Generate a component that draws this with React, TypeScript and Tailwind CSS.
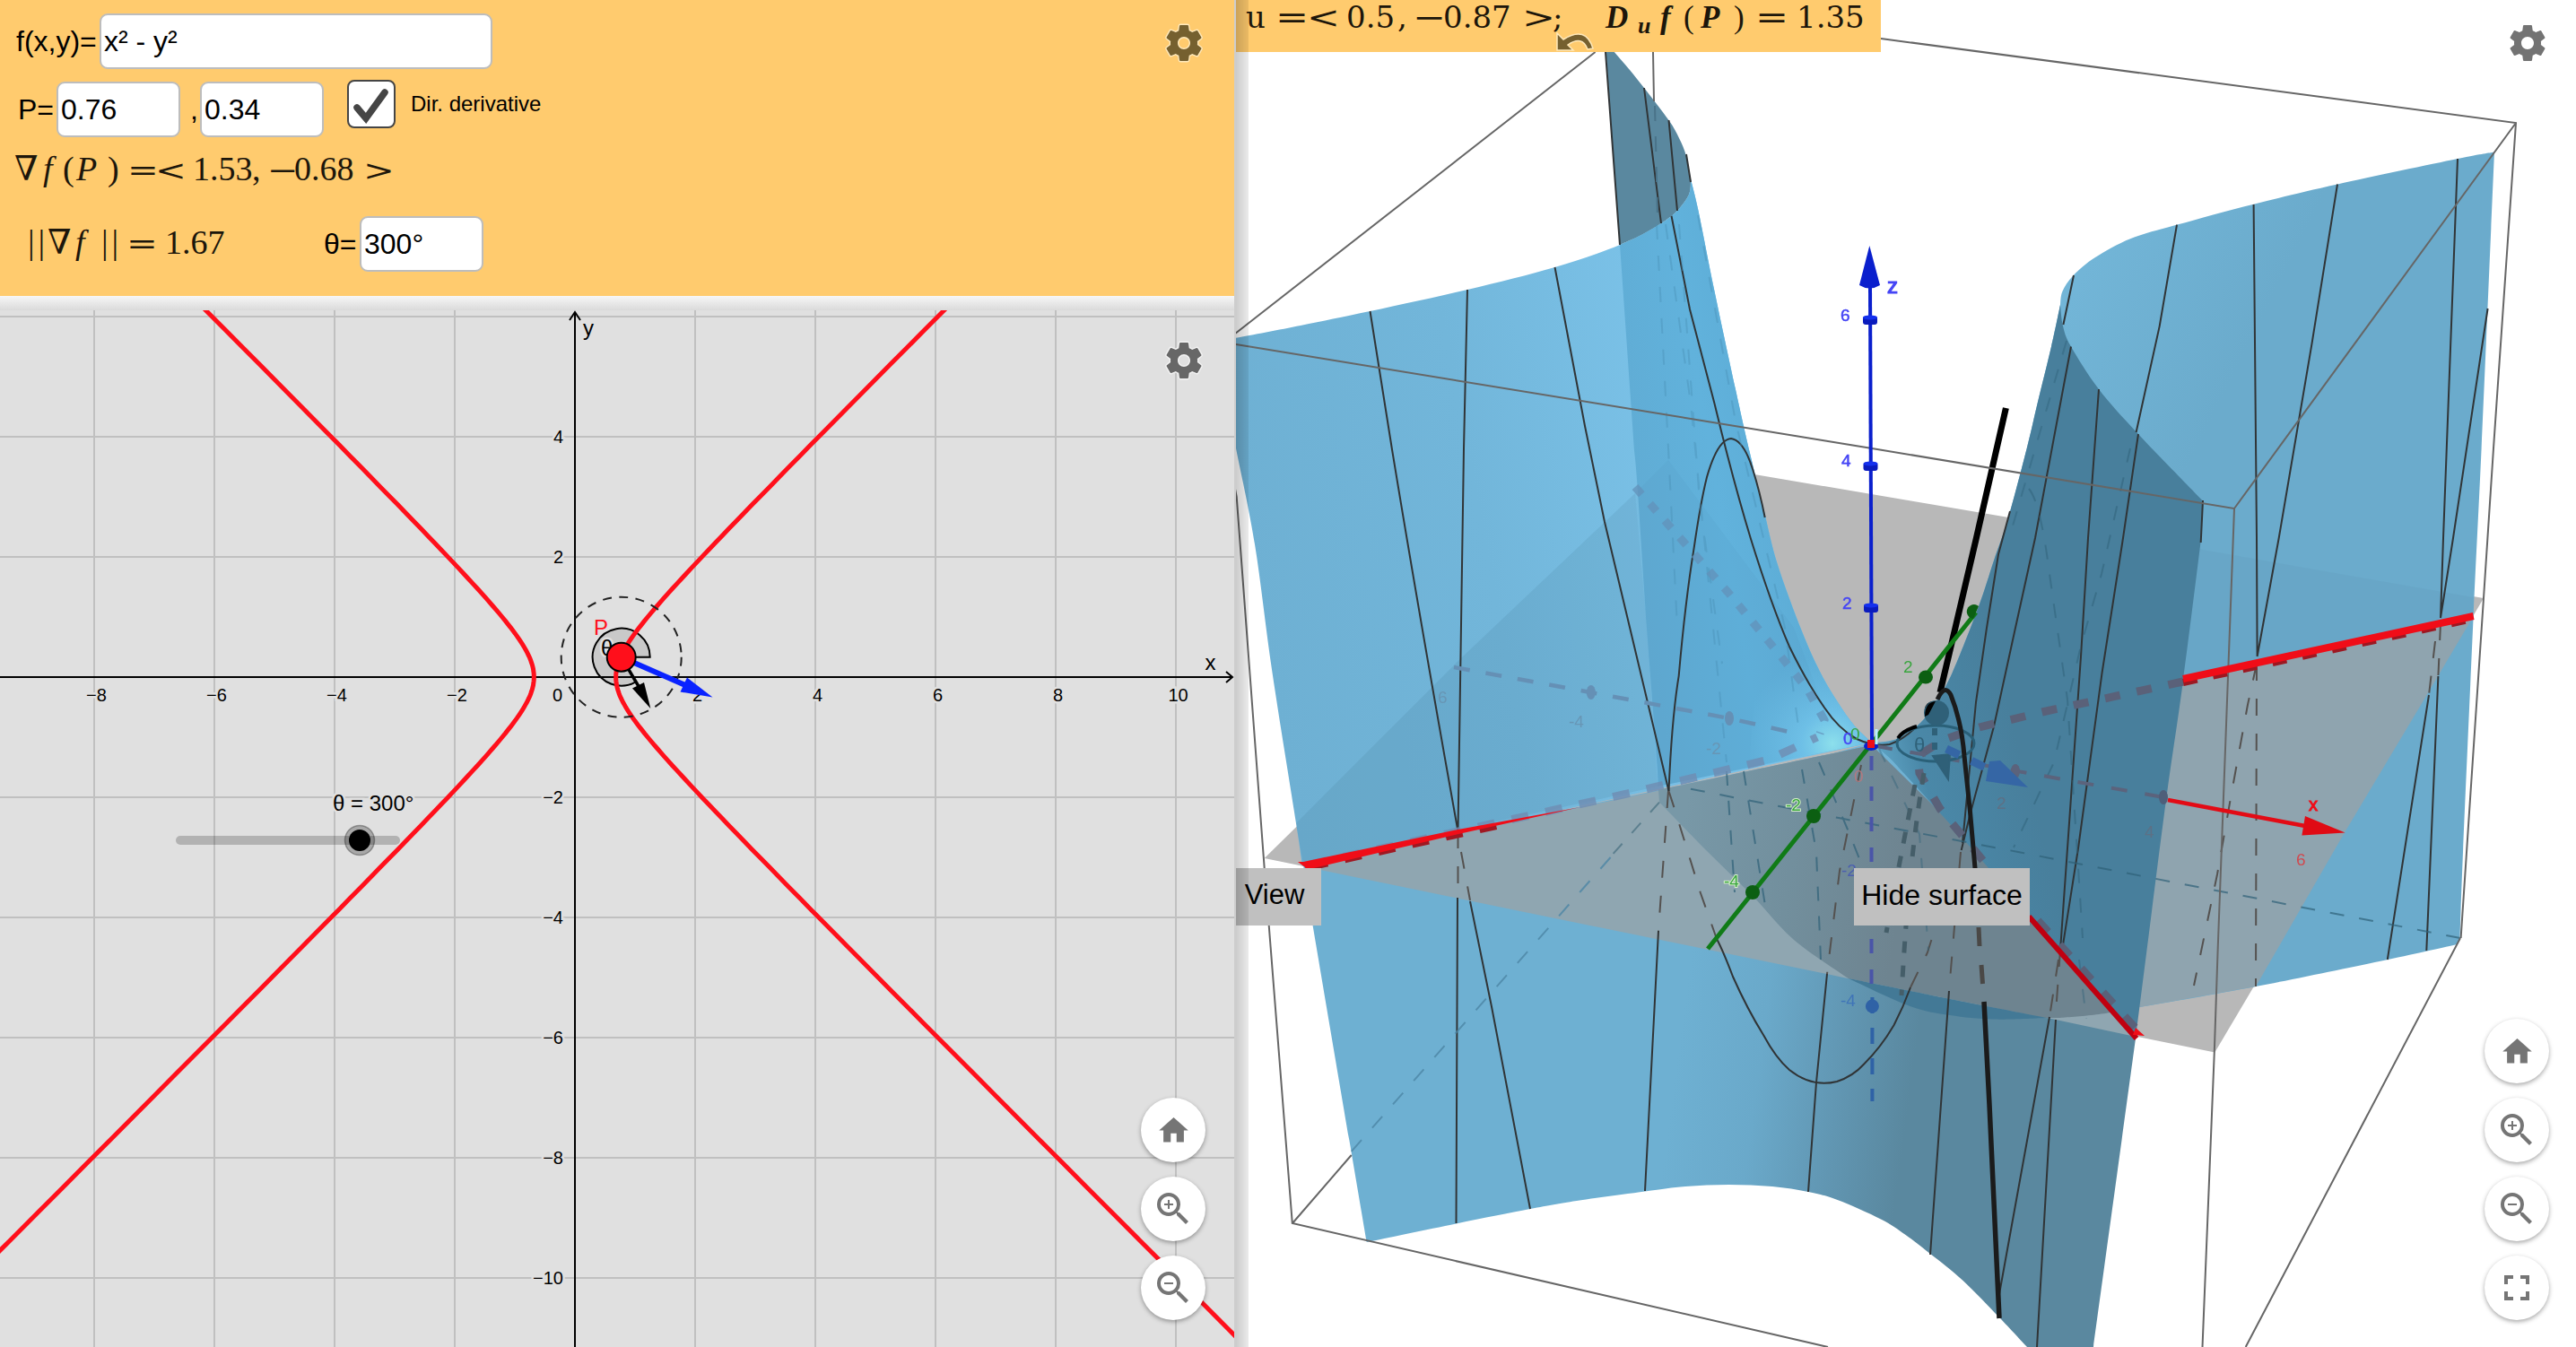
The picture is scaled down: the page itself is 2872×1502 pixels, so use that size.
import React from "react";
import { MdZoomIn, MdZoomOut, MdFullscreen } from "react-icons/md";

const GEAR =
  "M19.43 12.98c.04-.32.07-.64.07-.98s-.03-.66-.07-.98l2.11-1.65c.19-.15.24-.42.12-.64l-2-3.46c-.12-.22-.39-.3-.61-.22l-2.49 1c-.52-.4-1.08-.73-1.69-.98l-.38-2.65C14.46 2.18 14.25 2 14 2h-4c-.25 0-.46.18-.49.42l-.38 2.65c-.61.25-1.17.59-1.69.98l-2.49-1c-.23-.09-.49 0-.61.22l-2 3.46c-.13.22-.07.49.12.64l2.11 1.65c-.04.32-.07.65-.07.98s.03.66.07.98l-2.11 1.65c-.19.15-.24.42-.12.64l2 3.46c.12.22.39.3.61.22l2.49-1c.52.4 1.08.73 1.69.98l.38 2.65c.03.24.24.42.49.42h4c.25 0 .46-.18.49-.42l.38-2.65c.61-.25 1.17-.59 1.69-.98l2.49 1c.23.09.49 0 .61-.22l2-3.46c.12-.22.07-.49-.12-.64l-2.11-1.65zM12 15.5c-1.93 0-3.5-1.57-3.5-3.5s1.57-3.5 3.5-3.5 3.5 1.57 3.5 3.5-1.57 3.5-3.5 3.5z";

function Gear({ fill, halo }: { fill: string; halo?: string }) {
  return (
    <svg viewBox="0 0 24 24" className="block size-12 overflow-visible">
      {halo && <path d={GEAR} fill="none" stroke={halo} strokeWidth="1.4" />}
      <path d={GEAR} fill={fill} />
    </svg>
  );
}

function RoundButton({ children }: { children: React.ReactNode }) {
  return (
    <button className="flex size-[72px] items-center justify-center rounded-full bg-white text-[#757575] shadow-[0_2px_5px_rgba(0,0,0,0.35)]">
      {children}
    </button>
  );
}

function HomeIcon() {
  return (
    <svg viewBox="0 0 24 24" className="size-[39px]" fill="currentColor">
      <path d="M10 20v-6h4v6h5v-8h3L12 3 2 12h3v8z" />
    </svg>
  );
}

function Field({ value, className }: { value: string; className: string }) {
  return (
    <input
      readOnly
      value={value}
      className={
        "h-[62px] shrink-0 rounded-[9px] border-2 border-[#bdbdbd] bg-white pl-[3px] text-[32px] text-black outline-none " + className
      }
    />
  );
}

/* Relation and minus signs, widened to math-font proportions. */
function Op({ children, className }: { children: React.ReactNode; className: string }) {
  return (
    <span className={"shrink-0 font-['DejaVu_Serif',serif] " + className}>
      <span className="inline-block origin-left scale-x-130">{children}</span>
    </span>
  );
}

function ControlPanel() {
  return (
    <section className="relative h-[330px] w-full bg-[#ffcb6e] pt-[15px] text-[32px]">
      <div className="flex h-[62px] items-center">
        <span className="w-[111px] shrink-0 pl-[18px] leading-none">f(x,y)=</span>
        <Field value="x² - y²" className="w-[438px]" />
      </div>
      <div className="mt-[14px] flex h-[62px] items-center">
        <span className="w-[63px] shrink-0 pl-[20px] leading-none">P=</span>
        <Field value="0.76" className="w-[138px]" />
        <span className="w-[22px] shrink-0 pl-[11px] leading-none">,</span>
        <Field value="0.34" className="w-[138px]" />
        <label className="ml-[26px] flex items-center self-start">
          <span className="-mt-[2px] block h-[54px] w-[54px] rounded-[8px] border-[2.5px] border-[#454545] bg-white">
            <svg viewBox="0 0 50 50" className="size-full">
              <path d="M9 29 L19 41 L40 12" fill="none" stroke="#454545" strokeWidth="7.5" strokeLinecap="round" />
            </svg>
          </span>
          <span className="ml-[17px] pb-[2px] text-[24px] leading-none">Dir. derivative</span>
        </label>
      </div>
      <div className="mt-[14px] flex h-[46px] items-baseline pl-[16px] font-['Liberation_Serif',serif] text-[38px] leading-[42px] text-[#1c160b]">
        <span className="w-[32px] shrink-0 font-['DejaVu_Serif',serif] text-[38px] leading-[40px]">∇</span>
        <span className="w-[22px] shrink-0 italic">f</span>
        <span className="w-[15px] shrink-0">(</span>
        <span className="w-[35px] shrink-0 italic">P</span>
        <span className="w-[22px] shrink-0">)</span>
        <Op className="w-[31px] text-[32px] leading-[40px]">=</Op>
        <Op className="w-[42px] text-[32px] leading-[40px]">&lt;</Op>
        <span className="w-[66px] shrink-0">1.53</span>
        <span className="w-[17px] shrink-0">,</span>
        <Op className="w-[30px] text-[32px] leading-[40px]">−</Op>
        <span className="w-[77px] shrink-0">0.68</span>
        <Op className="w-[40px] text-[32px] leading-[40px]">&gt;</Op>
      </div>
      <div className="mt-[28px] flex h-[62px] items-center">
        <div className="flex h-[46px] w-[361px] shrink-0 items-baseline pl-[31px] font-['Liberation_Serif',serif] text-[38px] leading-[42px] text-[#1c160b]">
          <span className="w-[22px] shrink-0 tracking-[4px]">||</span>
          <span className="w-[31px] shrink-0 font-['DejaVu_Serif',serif] text-[38px] leading-[40px]">∇</span>
          <span className="w-[29px] shrink-0 italic">f</span>
          <span className="w-[28px] shrink-0 tracking-[4px]">||</span>
          <Op className="w-[43px] text-[32px] leading-[40px]">=</Op>
          <span>1.67</span>
        </div>
        <span className="w-[40px] shrink-0 leading-none">θ=</span>
        <Field value="300°" className="w-[138px]" />
      </div>
      <div className="absolute right-8 top-6">
        <Gear fill="#75602f" halo="#ffe9bb" />
      </div>
    </section>
  );
}

const UNIT = 67;
const OX = 641;
const OY = 755;

function branch(sign: number) {
  const a = Math.sqrt(0.4647);
  let d = "";
  for (let i = -80; i <= 80; i++) {
    const t = (i / 80) * 3.9;
    const x = OX + sign * a * Math.cosh(t) * UNIT;
    const y = OY - a * Math.sinh(t) * UNIT;
    d += (d ? "L" : "M") + x.toFixed(1) + " " + y.toFixed(1);
  }
  return d;
}

function Graph2D() {
  const xs = [-8, -6, -4, -2, 2, 4, 6, 8, 10];
  const ys = [6, 4, 2, -2, -4, -6, -8, -10];
  return (
    <section className="relative min-h-0 w-full flex-1 bg-[#e0e0e0]">
      <svg viewBox="0 346 1376 1156" className="block h-full w-full" fontFamily="'Liberation Sans', Arial, sans-serif">
        <g stroke="#c0c0c0" strokeWidth="2">
          {xs.map((v) => (
            <line key={v} x1={OX + v * UNIT} x2={OX + v * UNIT} y1="346" y2="1502" />
          ))}
          {ys.map((v) => (
            <line key={v} y1={OY - v * UNIT} y2={OY - v * UNIT} x1="0" x2="1376" />
          ))}
        </g>
        <g stroke="#000" strokeWidth="2" fill="none">
          <path d="M641 1502V349M635 357L641 348L647 357" />
          <path d="M0 755H1373M1367 749L1374 755L1367 761" />
        </g>
        <path d="M692.7 732.7H724.7A32 32 0 1 0 708.7 760.4Z" fill="rgba(0,0,0,.1)" stroke="#000" strokeWidth="2" />
        <g fill="none" stroke="#ff0f1b" strokeWidth="5">
          <path d={branch(1)} />
          <path d={branch(-1)} />
        </g>
        <circle cx="692.7" cy="732.7" r="67" fill="none" stroke="#222" strokeWidth="2" strokeDasharray="10 8.4" />
        <g fontSize="20" fill="#000" stroke="#e0e0e0" strokeWidth="5" paintOrder="stroke">
          {xs.map((v) => (
            <text key={v} x={OX + v * UNIT + 2.5} y="781.5" textAnchor="middle">
              {String(v).replace("-", "−")}
            </text>
          ))}
          {ys.slice(1).map((v) => (
            <text key={v} x="628" y={OY - v * UNIT + 7} textAnchor="end">
              {String(v).replace("-", "−")}
            </text>
          ))}
          <text x="616" y="781.5">0</text>
          <text x="650" y="374" fontSize="24">y</text>
          <text x="1343.5" y="746.5" fontSize="24">x</text>
          <text x="371" y="903.5" fontSize="24">θ = 300°</text>
          <text x="670" y="731" fontSize="24">θ</text>
        </g>
        <text x="662" y="708" fontSize="24" fill="#ff0f1b">P</text>
        <path d="M692.7 732.7L764 764" stroke="#0a23ff" strokeWidth="6" />
        <path d="M766 755.5L794.5 777.5L758.5 771.5Z" fill="#0a23ff" />
        <path d="M692.7 732.7L713 767" stroke="#000" strokeWidth="3.5" />
        <path d="M718 761L725.3 790L705 767.5Z" />
        <circle cx="692.7" cy="732.7" r="16" fill="#ff0f1b" stroke="#000" strokeWidth="2" />
        <path d="M201 937H441" stroke="#000" strokeWidth="10" strokeLinecap="round" opacity=".2" />
        <circle cx="401" cy="937" r="16.5" fill="#000" fillOpacity=".25" stroke="#000" strokeOpacity=".3" strokeWidth="1.5" />
        <circle cx="401" cy="937" r="12" />
      </svg>
      <div className="absolute right-8 top-8">
        <Gear fill="#676767" halo="#f3f3f3" />
      </div>
      <div className="absolute bottom-[30px] right-8 flex flex-col gap-4">
        <RoundButton><HomeIcon /></RoundButton>
        <RoundButton><MdZoomIn className="size-12" /></RoundButton>
        <RoundButton><MdZoomOut className="size-12" /></RoundButton>
      </div>
    </section>
  );
}

/* Builds a closed region from runs of points; each run is smoothed, and runs meet in sharp corners. */
function region(...runs: string[]) {
  let d = "";
  for (const run of runs) {
    const n = run.trim().split(/[\s,]+/).map(Number);
    const p: [number, number][] = [];
    for (let i = 0; i < n.length; i += 2) p.push([n[i], n[i + 1]]);
    d += (d ? "L" : "M") + p[0].join(" ");
    for (let i = 0; i < p.length - 1; i++) {
      const a = p[Math.max(0, i - 1)];
      const b = p[i];
      const c = p[i + 1];
      const e = p[Math.min(p.length - 1, i + 2)];
      const c1 = [b[0] + (c[0] - a[0]) / 6, b[1] + (c[1] - a[1]) / 6];
      const c2 = [c[0] - (e[0] - b[0]) / 6, c[1] - (e[1] - b[1]) / 6];
      d += "C" + [...c1, ...c2, ...c].map((v) => v.toFixed(1)).join(" ");
    }
  }
  return d + "Z";
}

const EAR_LIP = "1806 273 1830 262 1852 249 1869 236 1883 217 1885 200";
const EAR_CURVE = "1885 200 1880 174 1872 154 1860.5 134 1833 98 1817 78 1798 56 1792 50";
const LEFT_TOP = "1372 378 1450 363 1527.5 347 1636 323 1733.5 298 1806 273 1852 249 1869 236 1883 217 1885 200";
const LEFT_SIL = "1885 200 1893.5 235 1910.5 320 1934.7 433 1950.7 504 1967 571 1981.7 629 2009 704 2031.7 754 2053.5 790 2070 812 2087 828";
const SADDLE_SIL =
  "2087 828 2102 827 2118 822.7 2136.7 810 2148 798 2160 780 2176.7 750 2205.7 677 2223 625 2238.7 578.6 2259.7 500 2272 448 2287 386.5 2297 340";
const RIGHT_TOP = "2297 340 2299.4 325 2311.7 307 2336 287 2375.7 266 2427.4 250.6 2512.6 227.7 2606 205.5 2740 177 2781 169.5";
const RIGHT_EDGE = "2781 169.5 2766.6 500 2757.7 686 2746 950 2742.5 1046";
const BACK_BOTTOM =
  "2740 1053 2660 1070.4 2515 1100 2385.6 1123 2340 1130 2297 1134.5 2223 1136.6 2174 1132 2129.5 1122 2060.7 1091 2000 1048 1954 999 1901 947 1850 894.6";
const FRONT_BOTTOM =
  "2260 1502 2229 1469 2188.6 1428 2152 1398 2124.6 1377 2097 1359.5 2048.6 1338 2016 1329 1976 1323 1927.4 1321 1879 1323 1834 1328.5 1757.8 1339 1706 1348 1623.5 1364.4 1523.7 1385";

function Surface() {
  return (
    <g>
      <polygon points="1409.7,957 2469.3,1173.6 2769,667 1862,513" fill="#b8b8b8" />
      <path d={region(SADDLE_SIL, RIGHT_TOP, RIGHT_EDGE, BACK_BOTTOM)} fill="url(#rightSheet)" />
      <polygon points="2300,590 2453.7,612.5 2757.7,666 2757.7,686 2434,760" fill="#000" opacity=".025" />
      <polygon points="2434,760 2757.7,687 2708,771 2613.6,929 2515,1100 2385.6,1123 2300,1135 2300,790" fill="#8fa4af" />

      <path d={region(LEFT_TOP, LEFT_SIL, "1452 966 1445 918 1418.5 750 1399 607 1378 500 1372 468")} fill="url(#leftSheet)" />
      <path d={region("1790 50 1806 273", EAR_LIP, EAR_CURVE)} fill="#5a889f" />
      <path d={region(EAR_LIP, LEFT_SIL, "1848 877 1847.5 853 1836 700 1825.6 543 1821.8 500")} fill="url(#earOverlap)" />
      <polygon points="1445,918 1627,735.7 1823,550 1836,700 1848,877 1453,963" fill="#1f4a66" opacity=".09" />
      <polygon points="1823,550 1836,700 1848,877 2050,834 2000,700 1860,513" fill="#1f4a66" opacity=".03" />
      <path d={region("2087 828 2070 812 2053.5 790 2031.7 754 2009 704", "1960 720 1950 856")} fill="url(#glow)" />

      <path d={region("1453 964 2087 831", "2381 1158 2334 1502", FRONT_BOTTOM, "1523.7 1385 1463.6 1032")} fill="url(#frontSheet)" />
      <polygon points="1453,966 2087,831 2381,1156 2292,1137 2130,1106 2036.5,1086 1639,1004.6" fill="#8fa6b1" />
      <path
        d={region("1849 881 2087 831", "2385 1123 2340 1131 2297 1135", "2280 1135 2174 1114 2060.7 1091", "2060.7 1091 2000 1048 1954 999 1901 947 1850 894.6")}
        fill="url(#underPlane)"
      />
      <path d={region("2060.7 1091 2130 1105 2174 1114 2282 1135", "2282 1135 2223 1136.6 2174 1132 2129.5 1122 2060.7 1091")} fill="#437996" />
      <path
        d={region(SADDLE_SIL, "2297 340 2300 363.6 2309 386.5 2340 434 2383 483 2455.5 558", "2453.7 603.6 2433.8 760.7 2415.4 889 2396 1040 2381 1158", "2381 1158 2262 1020 2176 921 2107.7 846")}
        fill="url(#darkWall)"
      />
    </g>
  );
}

function MeshLines() {
  return (
    <g fill="none" stroke="#303436" strokeWidth="2" strokeLinejoin="round">
      <path d="M1527.5 347L1551.8 500Q1583 690 1625.5 927M1636 323L1632 500L1625.5 927M1733.5 298L1767 475L1789 582L1860.5 882" />
      <path d="M1863.5 240.7L1884 345L1911.5 450Q1932 535 1951.7 600Q1975 675 1995 721Q2015 762 2034 789Q2050 813 2070 824Q2090 833 2106.7 830Q2120 826 2136 811" />
      <path d="M1860.5 882Q1864 800 1871.7 753.6Q1879 670 1888.7 610.7Q1896 560 1903 532Q1915 490 1930 489Q1944 491 1954 523Q1962 548 1967.7 577" />
      <path d="M1790 58L1806 273M1833 98L1852 249M1860.5 134L1870 235M1880 172L1885 203" />
      <path d="M1625 1001L1623.5 1364M1639 1005L1663 1122.5L1706 1348M1849 1038L1834 1328M2037 1086L2025 1207L2016 1329M2173 1105L2152 1399" />
      <path d="M1914 1047Q1921 1060 1932 1089Q1948 1125 1966 1154Q1980 1180 1995 1193Q2020 1213 2048 1206Q2066 1200 2077.7 1187Q2097 1168 2111.6 1143Q2122 1123 2130 1101" />
      <path d="M2285 1134L2229 1443M2292 1137L2271 1502" />
      <path d="M2309 386.5L2269 600L2247 700L2223 810L2196.7 907L2186.7 948M2340 434L2328 600L2320 732L2297 1060M2384 484L2367 600L2343.6 750L2317 946L2299 1060" />
      <path d="M2241 570L2228 618L2215 700L2203 783L2188 940M2456 558L2453.7 605" />
      <path d="M2312 307L2300.4 362M2427 250.6L2407.7 363.6L2381.6 482M2512.6 228L2516 600L2516.6 732M2606 205.5L2577.6 382.7L2540.7 600L2516.6 732M2740 177L2724 600L2721 689M2773.6 344L2735 600L2721 689" />
      <path d="M2718.4 754L2705.3 1060M2708 775L2661.8 1070" />
      <g stroke="#54514f" strokeDasharray="19 20">
        <path d="M1625.5 927V998M1629 950L1639 1004M1860 882L1849 1038M1860.5 882L1867 902L1896 996L1914 1047M2075 853L2051 971L2037 1086M2186 950L2173 1105" />
        <path d="M2516 740L2515 1100M2516 740L2506 785.7L2487.7 885.7L2472 975L2446 1099M2721 695L2718.4 754M2715 715L2708 775M2297 1059L2292 1130M2295 1070L2285 1134M2130 1101L2149 1062L2159 1030" />
      </g>
      <g stroke="#2f6178" strokeDasharray="16 17" opacity=".7">
        <path d="M2743 1046L2250 950L2050 912L1879 878.6" />
        <path d="M1925 860L1934 995M1944 860L1969 1016M2009 858L2025 950L2030 1070M2028 850L2060 925L2080 975" />
        <path d="M2262 545Q2275 560 2285 640L2305 780L2322 1046M2375 500L2343 640L2320 720L2290 850L2245 945" opacity=".7" />
        <path d="M2304 380L2240 600M2095 835L2140 930L2150 1060M2318 1070L2326 1136" opacity=".6" />
      </g>
      <g stroke="#4a90b5" strokeDasharray="17 18" opacity=".8">
        <path d="M1795.6 956L1506.7 1284" stroke="#4d86a5" />
        <path d="M1847 250L1860 500L1870 700M1857 250L1885 450L1925 850M1872 250L1895 560L1920 740M1893 240L1935 470L1990 700L2005 810" opacity=".5" />
      </g>
      <path d="M1850 894.6L1795 956" stroke="#5c7f8e" strokeDasharray="15 16" />
    </g>
  );
}

function BoundingBox() {
  return (
    <g fill="none" stroke="#666" strokeWidth="2">
      <path d="M1372 376L1778.6 58M2097 43L2805 137L2780 500L2769 667L2743.6 1046M2805 137L2491 567M1372 383L2087 500L2491 567L2472.6 1060L2468.8 1173L2455.5 1502" />
      <path d="M1843 58L1844 113M2743 1046L2503.7 1502M1376 540L1378.7 554L1409.7 968L1440.8 1364L2038 1502M1441 1364L1506.7 1288" />
      <path d="M1845 118L1848 240" stroke="#4a7389" strokeDasharray="17 17" />
    </g>
  );
}

function Tick({ x, y }: { x: number; y: number }) {
  return (
    <g>
      <rect x={x - 8} y={y - 4.5} width="16" height="9.5" rx="3" fill="#0a1bbd" />
      <ellipse cx={x} cy={y - 3} rx="8" ry="2.5" fill="#1430ee" />
    </g>
  );
}

function Graph3D() {
  return (
    <svg viewBox="1378 0 1494 1502" className="block h-full w-full" fontFamily="'Liberation Sans', Arial, sans-serif">
      <defs>
        <linearGradient id="leftSheet" gradientUnits="userSpaceOnUse" x1="1378" y1="560" x2="1850" y2="470">
          <stop offset="0" stopColor="#6eb0d3" />
          <stop offset=".55" stopColor="#72b6da" />
          <stop offset="1" stopColor="#7ac1e7" />
        </linearGradient>
        <linearGradient id="earOverlap" gradientUnits="userSpaceOnUse" x1="1810" y1="560" x2="2040" y2="520">
          <stop offset="0" stopColor="#60abd3" />
          <stop offset=".45" stopColor="#61b2dc" />
          <stop offset="1" stopColor="#5aa9d2" />
        </linearGradient>
        <radialGradient id="glow" gradientUnits="userSpaceOnUse" cx="2043" cy="829" r="100">
          <stop offset="0" stopColor="#8de0ec" />
          <stop offset=".35" stopColor="#75c8ee" stopOpacity=".7" />
          <stop offset="1" stopColor="#6cbde5" stopOpacity="0" />
        </radialGradient>
        <linearGradient id="rightSheet" gradientUnits="userSpaceOnUse" x1="2300" y1="350" x2="2480" y2="440">
          <stop offset="0" stopColor="#72b5d7" />
          <stop offset="1" stopColor="#6babcc" />
        </linearGradient>
        <linearGradient id="frontSheet" gradientUnits="userSpaceOnUse" x1="1870" y1="1180" x2="2130" y2="1215">
          <stop offset="0" stopColor="#6eb0d2" />
          <stop offset=".35" stopColor="#6aa9ca" />
          <stop offset=".7" stopColor="#6196b2" />
          <stop offset="1" stopColor="#5a889f" />
        </linearGradient>
        <linearGradient id="underPlane" gradientUnits="userSpaceOnUse" x1="1870" y1="960" x2="2120" y2="1000">
          <stop offset="0" stopColor="#7898a7" />
          <stop offset=".5" stopColor="#728f9d" />
          <stop offset="1" stopColor="#6e8490" />
        </linearGradient>
        <linearGradient id="darkWall" gradientUnits="userSpaceOnUse" x1="2087" y1="830" x2="2240" y2="790">
          <stop offset="0" stopColor="#5fa5c6" />
          <stop offset=".3" stopColor="#4a88a8" />
          <stop offset="1" stopColor="#487f9c" />
        </linearGradient>
      </defs>

      <Surface />
      <path d="M2236.4 455L2203.4 600L2180 700L2163 772" stroke="#000" strokeWidth="7" fill="none" />
      <MeshLines />
      <BoundingBox />

      {/* level curve on the plane */}
      <g fill="none" strokeWidth="9">
        <path d="M1823 543L1927 661L1985.6 732L2014.7 768L2034 803L2029 818" stroke="#6391b9" strokeDasharray="11 14" opacity=".75" />
        <path d="M1460 964L1823 883L1972 847L2026 822" stroke="#6f8cb2" strokeDasharray="19 19.5" opacity=".8" />
        <path d="M1462 968L1680 920" stroke="#a01822" strokeWidth="5" strokeDasharray="19 19.5" />
        <path d="M2434 760L2276.7 794L2206.7 811L2166.7 825L2138 843L2140 862L2163 902L2193 938L2212 961L2266 1020L2384 1150" stroke="#5a6179" strokeDasharray="17 19" />
        <path d="M2434 761L2757 690" stroke="#9c1822" strokeWidth="8" strokeDasharray="16 18" />
      </g>
      <path d="M1453 961L1625.5 925L1762 900L1626 930L1456 970Z" fill="#f00d18" />
      <path d="M2434 757L2757.7 687" stroke="#f00d18" strokeWidth="8" />
      <path d="M2262 1022L2382 1158" stroke="#c00010" strokeWidth="6" />
      <path d="M2381 1146L2391 1155L2378 1154ZM1447 961L1458 961L1455 967Z" fill="#f00d18" />

      {/* x axis */}
      <path d="M1621 744L1773 772L1928 801L2008 819" fill="none" stroke="#6590b5" strokeWidth="4.5" strokeDasharray="18 18" />
      <ellipse cx="1773.8" cy="772" rx="5" ry="8" fill="#6590b5" />
      <ellipse cx="1928" cy="801" rx="5" ry="8" fill="#6590b5" />
      <path d="M2092 832L2412 889" stroke="#5b637c" strokeWidth="4" strokeDasharray="18 20" />
      <ellipse cx="2247" cy="860" rx="5" ry="8" fill="#5b637c" />
      <ellipse cx="2412" cy="889" rx="5" ry="8" fill="#4e5f7a" />
      <path d="M2417 892L2570 921" stroke="#e30b15" strokeWidth="4.5" />
      <path d="M2570 910L2614.6 928.6L2566.4 931.6Z" fill="#e00a14" />

      {/* tangent vectors and angle at P */}
      <ellipse cx="2158" cy="829" rx="43" ry="20" fill="none" stroke="#2a6078" strokeWidth="3" />
      <path d="M2116 823Q2122 814 2137 810" stroke="#000" strokeWidth="4" fill="none" />
      <circle cx="2155" cy="791" r="9" fill="#000" />
      <circle cx="2159" cy="795" r="14" fill="#2f6078" />
      <path d="M2146 799Q2146 783 2158 782L2150 797Z" />
      <path d="M2157 812V842" stroke="#2f6078" strokeWidth="6" strokeDasharray="8 8" />
      <path d="M2155 843L2174 841L2172 869Z" fill="#2f6078" stroke="#2f6078" strokeWidth="2" />
      <text x="2134" y="838" fontSize="22" fill="#2f6078">θ</text>
      <path d="M2170 835L2216 857" stroke="#3566a5" strokeWidth="9" strokeDasharray="16 15" />
      <path d="M2218 849L2230 848L2261 878L2214 871Z" fill="#3566a5" />
      <path d="M2145 862Q2128 960 2120 1110M2135 875Q2120 950 2103 1040" fill="none" stroke="#455e69" strokeWidth="5" strokeDasharray="13 14" />
      <path d="M2160 780Q2168 762 2175 775Q2187 805 2190 843Q2197 905 2202 968L2204 1000" fill="none" stroke="#1b1b1b" strokeWidth="5" />
      <path d="M2206 1034L2207 1055M2209 1076L2210.5 1097" stroke="#4a4846" strokeWidth="5" />
      <path d="M2212 1117L2218 1232L2229 1470" fill="none" stroke="#1b1b1b" strokeWidth="5.5" />

      {/* y axis */}
      <path d="M1904 1058L2086 830L2203 683" fill="none" stroke="#107b17" strokeWidth="5" />
      <g fill="#0c5f12">
        <ellipse cx="1954" cy="995" rx="8" ry="8" />
        <ellipse cx="2022" cy="910" rx="8" ry="8" />
        <ellipse cx="2147" cy="755" rx="8" ry="7.5" />
        <path d="M2206 676A8 8 0 1 0 2200 690Z" />
      </g>

      {/* z axis */}
      <path d="M2085 318L2087 828" stroke="#0a1fcd" strokeWidth="4" />
      <path d="M2084.3 274L2096 318Q2084.5 325 2073 318Z" fill="#0a1fcd" />
      <Tick x={2085} y={357} />
      <Tick x={2085.5} y={520} />
      <Tick x={2086} y={678} />
      <path d="M2086.5 843V1100" stroke="#4a55a8" strokeWidth="4" strokeDasharray="16 18" />
      <path d="M2087.4 1112V1228" stroke="#2f62a6" strokeWidth="4" strokeDasharray="18 16" />
      <circle cx="2087.4" cy="1122" r="7.5" fill="#2f62a6" />
      <ellipse cx="2086" cy="832" rx="8" ry="5" fill="#0a1fcd" />
      <rect x="2082" y="825" width="8" height="9" fill="#f00d18" />
      <path d="M2092 813V830" stroke="#b9f0ff" strokeWidth="3" />

      <g fontSize="19">
        <g fill="#4545f5" stroke="#4545f5" strokeWidth=".5">
          <text x="2052" y="358">6</text>
          <text x="2053" y="520">4</text>
          <text x="2054" y="679">2</text>
          <text x="2055" y="830">0</text>
          <text x="2104" y="327" fontSize="24" strokeWidth="1.2">z</text>
        </g>
        <g fill="#3aa53f">
          <text x="2122" y="750">2</text>
          <text x="2063" y="825">0</text>
        </g>
        <g fill="#3aa53f" stroke="#d5efc8" strokeWidth="2" paintOrder="stroke">
          <text x="1991" y="904">-2</text>
          <text x="1922" y="989">-4</text>
        </g>
        <g fill="#4c5fb0">
          <text x="2053" y="977">-2</text>
          <text x="2052" y="1122" fill="#3f74b8">-4</text>
        </g>
        <g fill="#6896b5">
          <text x="1603" y="784">6</text>
          <text x="1749" y="811">-4</text>
          <text x="1902" y="841">-2</text>
        </g>
        <g fill="#5d7085">
          <text x="2226" y="902">2</text>
          <text x="2391" y="934">4</text>
        </g>
        <text x="2067" y="872" fill="#b07a80">0</text>
        <text x="2560" y="965" fill="#d04a50">6</text>
        <text x="2574" y="904" fill="#f00d18" stroke="#f00d18" strokeWidth="1" fontSize="20">x</text>
      </g>
    </svg>
  );
}

function Banner() {
  return (
    <div className="absolute left-0 top-0 flex h-[58px] w-[719px] items-baseline bg-[#ffcb6e] pl-[11px] font-['DejaVu_Serif',serif] text-[34px] leading-[39px] text-[#1c160b]">
      <span className="w-[33px] shrink-0">u</span>
      <Op className="w-[35px]">=</Op>
      <Op className="w-[44px]">&lt;</Op>
      <span className="w-[57px] shrink-0">0.5</span>
      <span className="w-[17px] shrink-0">,</span>
      <Op className="w-[34px]">−</Op>
      <span className="w-[88px] shrink-0">0.87</span>
      <Op className="w-[34px]">&gt;</Op>
      <span className="w-[59px] shrink-0">;</span>
      <span className="w-[36px] shrink-0 font-['Liberation_Serif',serif] text-[35px] font-bold italic">D</span>
      <span className="relative top-[6px] w-[25px] shrink-0 font-['Liberation_Serif',serif] text-[26px] font-bold italic leading-[30px]">u</span>
      <span className="w-[26px] shrink-0 font-['Liberation_Serif',serif] text-[35px] font-bold italic">f</span>
      <span className="w-[19px] shrink-0 font-['Liberation_Serif',serif] text-[35px]">(</span>
      <span className="w-[37px] shrink-0 font-['Liberation_Serif',serif] text-[35px] font-bold italic">P</span>
      <span className="w-[24px] shrink-0 font-['Liberation_Serif',serif] text-[35px]">)</span>
      <Op className="w-[46px]">=</Op>
      <span>1.35</span>
      <svg viewBox="0 0 44 22" className="absolute left-[356px] top-[36px] h-[22px] w-[44px]">
        <path d="M2 1L2 20L20 20L14 14Q30 3 36 19L42 18Q34 -8 9 8Z" fill="#75602f" stroke="#ffe9bb" strokeWidth="1.5" />
      </svg>
    </div>
  );
}

export default function App() {
  return (
    <main className="flex h-[1502px] w-[2872px] overflow-hidden bg-white font-['Liberation_Sans',Arial,sans-serif] text-black">
      <div className="flex h-full w-[1376px] shrink-0 flex-col">
        <ControlPanel />
        <div className="h-4 shrink-0 bg-linear-to-b from-[#f7f7f7] to-[#dadada]" />
        <Graph2D />
      </div>
      <div className="h-full w-[2px] shrink-0 bg-[#cdcdcd]" />
      <section className="relative h-full min-w-0 flex-1 overflow-hidden">
        <Graph3D />
        <Banner />
        <button className="absolute left-0 top-[968px] h-16 w-[95px] bg-[#c0c0c0] pb-[4px] pr-[9px] text-[31px]">View</button>
        <button className="absolute left-[689px] top-[968px] h-16 w-[196px] bg-[#c0c0c0] pb-[4px] text-[32px]">Hide surface</button>
        <div className="absolute inset-y-0 left-0 w-[14px] bg-linear-to-r from-black/20 to-black/8" />
        <div className="absolute right-[30px] top-6">
          <Gear fill="#737373" />
        </div>
        <div className="absolute bottom-[30px] right-[30px] flex flex-col gap-4">
          <RoundButton><HomeIcon /></RoundButton>
          <RoundButton><MdZoomIn className="size-12" /></RoundButton>
          <RoundButton><MdZoomOut className="size-12" /></RoundButton>
          <RoundButton><MdFullscreen className="size-12" /></RoundButton>
        </div>
      </section>
    </main>
  );
}
